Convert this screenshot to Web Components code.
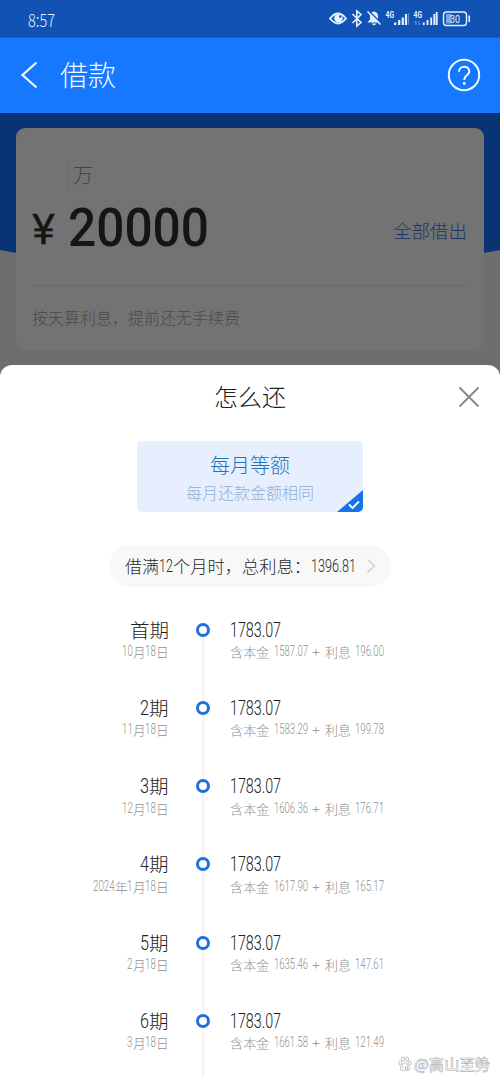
<!DOCTYPE html>
<html lang="zh-CN"><head><meta charset="utf-8"><title>借款</title>
<style>
html,body{margin:0;height:1083px;overflow:hidden;background:#fff}
body{font-family:Roboto,"Noto Sans CJK SC",sans-serif;color:#333;font-weight:300}
</style></head><body>
<loan-app></loan-app>
<script>
// Text condensed or expanded horizontally to the width in its "w" attribute.
class FitText extends HTMLElement{
  constructor(){super();this.attachShadow({mode:'open'}).innerHTML=`<style>
  :host{display:block;white-space:nowrap;flex:none}
  span{display:inline-block;transform-origin:0 50%}</style><span><slot></slot></span>`}
  connectedCallback(){
    const s=this.shadowRoot.firstElementChild.nextElementSibling,w=+this.getAttribute('w');
    this.style.width=w+'px';
    const n=s.offsetWidth&&s.getBoundingClientRect().width;
    if(n)s.style.transform=`scaleX(${w/n})`;
  }
}
class StatusBar extends HTMLElement{
  constructor(){super();this.attachShadow({mode:'open'}).innerHTML=`<style>
  :host{display:flex;justify-content:space-between;box-sizing:border-box;height:38px;background:#1152b4;color:#d9f2ff;padding:9px 30px 0 28px;border-bottom:1px solid #1a61c8}
  fit-text{font:300 18px/20px "Noto Sans CJK SC",sans-serif;}
  svg{display:block;margin-top:-9px}</style>
  <fit-text w="27">8:57</fit-text>
  <svg width="142" height="37" viewBox="328 0 142 37" fill="none" stroke="#e2f3ff">
   <path d="M330 18.5Q338 8.5 346 18.5Q338 28.5 330 18.5Z" stroke-width="1.8"/><circle cx="338.5" cy="18.3" r="4.3" fill="#e2f3ff" stroke="none"/><circle cx="340.300" cy="16.5" r="1.2" fill="#1152b4" stroke="none"/>
   <path d="M352.5 14l8.5 8.5-4.2 3.5V11l4.2 3.5-8.5 8.5" stroke-width="1.6"/>
   <path d="M367.500 22.500l2.500-3v-3q0-4.500 4-5q4 .5 4 5v3l2.500 3zM371.500 23.500h5q-2.500 3.500-5 0" fill="#e2f3ff" stroke="none"/>
   <path d="M368.500 10.500l13 13" stroke="#1152b4" stroke-width="1.500"/><path d="M367.500 11.500l13 13" stroke-width="1.5"/>
   <path d="M395.200 25v-2.500M399.200 25v-5M402.800 25v-7.500M406 25v-11" stroke-width="2.200"/><path d="M408.500 25V13" stroke="#5991d8" stroke-width="1.2"/>
   <path d="M423.700 25v-2.500M427.500 25v-5M431.200 25v-7.500M434.300 25v-11M436.700 25V12" stroke-width="1.900"/>
   <path d="M416 25v-4l-1.300 1.500M419 21v4l1.300-1.500" stroke="#5eb0ef" stroke-width=".9"/>
   <g fill="#e2f3ff" stroke="none" font-family="Roboto" font-weight="700" font-size="8.200"><text x="385.500" y="17.800" textLength="8.500" lengthAdjust="spacingAndGlyphs">4G</text><text x="413.500" y="17.800" textLength="8.500" lengthAdjust="spacingAndGlyphs">4G</text></g>
   <rect x="443.500" y="12" width="23" height="13.500" rx="3" stroke-width="1.400"/><path d="M446 14h5.500v9.500H446z" fill="#7da8df" stroke="none"/><path d="M469.200 15.500v6.500" stroke-width="1.600"/>
   <text x="450" y="22.800" fill="#e2f3ff" stroke="none" font-family="Roboto" font-weight="400" font-size="11.500" textLength="10" lengthAdjust="spacingAndGlyphs">30</text>
  </svg>`}
}
class NavBar extends HTMLElement{
  constructor(){super();this.attachShadow({mode:'open'}).innerHTML=`<style>
  :host{display:flex;align-items:center;box-sizing:border-box;height:75px;background:#1677ff;color:#f0fbff;padding:0 19px 0 20px}
  fit-text{font:300 28px/40px "Noto Sans CJK SC",sans-serif;margin:-4px auto 0 22px}
  svg{fill:none;stroke:#f0fbff;flex:none;margin-top:-1px}</style>
  <svg width="18" height="30" viewBox="0 0 18 30"><path d="M16.500 2.500L2.500 15L16.500 27.500" stroke-width="2.200"/></svg>
  <fit-text w="56"><slot></slot></fit-text>
  <svg width="34" height="34" viewBox="0 0 34 34"><circle cx="17" cy="17" r="15.200" stroke-width="2"/><path d="M12 13.700C12 7 22.300 7 22.300 13.500C22.300 17 17.200 17.300 17.200 22" stroke-width="2"/><circle cx="17.200" cy="25.500" r="1.400" fill="#f0fbff" stroke="none"/></svg>`}
}
class LoanCard extends HTMLElement{
  constructor(){super();this.attachShadow({mode:'open'}).innerHTML=`<style>
  :host{display:block;box-sizing:border-box;height:262px;padding:15px 16px 0;background:#6e6e6e url('data:image/svg+xml,<svg xmlns="http://www.w3.org/2000/svg" width="500" height="150"><path d="M0 0H500V137Q250 185 0 137Z" fill="%23083474"/></svg>') no-repeat}
  .card{box-sizing:border-box;height:222px;background:#737373;border-radius:9px;padding:34px 16px 0;}
  .unit{display:flex;margin-left:35px;border-left:1px solid #686868;padding-left:5px;height:26px;font:300 20px/26px "Noto Sans CJK SC";color:#444}
  .sum{display:flex;align-items:flex-start;height:97px;border-bottom:1px solid #696969;color:#151515}
  .yen{font:400 43px/60px Roboto;margin-top:11px;-webkit-text-stroke:.3px #151515}
  .num{font:500 54.500px/60px Roboto;margin:9px auto 0 13px}
  .all{font:300 18.700px/28px "Noto Sans CJK SC";color:#17376b;margin:28px 1px 0 0}
  .note{font:300 16px/24px "Noto Sans CJK SC";color:#4a4a4a;margin-top:19px}
  </style><div class="card"><div class="unit"><fit-text w="20">万</fit-text></div>
  <div class="sum"><fit-text class="yen" w="23">¥</fit-text><fit-text class="num" w="141">20000</fit-text><fit-text class="all" w="74">全部借出</fit-text></div>
  <fit-text class="note" w="208">按天算利息，提前还无手续费</fit-text></div>`}
}
class PlanOption extends HTMLElement{
  constructor(){super();this.attachShadow({mode:'open'}).innerHTML=`<style>
  :host{display:flex;flex-direction:column;align-items:center;position:relative;box-sizing:border-box;width:226px;height:71px;padding-top:10px;border-radius:5px;background:#e7effe;overflow:hidden}
  .t{font:300 20px/28px "Noto Sans CJK SC";color:#1d73b9}.s{font:300 16px/24px "Noto Sans CJK SC";color:#8fb2d2;margin-top:1px}
  svg{position:absolute;right:0;bottom:0}</style>
  <fit-text class="t" w="80"><slot></slot></fit-text><fit-text class="s" w="128"><slot name="sub"></slot></fit-text>
  <svg width="27" height="22" viewBox="0 0 27 22"><path d="M27 0V22H1Z" fill="#1673ec"/><path d="M13 14.500l3.500 3.500 6.500-6.500" fill="none" stroke="#fff" stroke-width="1.800"/></svg>`}
}
class TotalPill extends HTMLElement{
  constructor(){super();this.attachShadow({mode:'open'}).innerHTML=`<style>
  :host{display:flex;align-items:center;box-sizing:border-box;width:282px;height:42px;padding:0 15px 0 16px;border-radius:21px;background:#f8f8f8;color:#282828;font:300 17px/26px "Noto Sans CJK SC"}
  .n{font:300 18.500px/26px Roboto}
  svg{margin-left:auto}</style>
  <fit-text w="34">借满</fit-text><fit-text class="n" w="14">12</fit-text><fit-text w="138">个月时，总利息：</fit-text><fit-text class="n" w="45">1396.81</fit-text>
  <svg width="10" height="16" viewBox="0 0 10 16"><path d="M1.500 1.500L8.500 8L1.500 14.500" fill="none" stroke="#ccc" stroke-width="1.300"/></svg>`}
}
class PlanRow extends HTMLElement{
  constructor(){super();this.attachShadow({mode:'open'})}
  connectedCallback(){
    const a=n=>this.getAttribute(n),t=(s,nw,cw)=>s.match(/\d+|\D+/g).map(p=>/\d/.test(p)
      ?`<fit-text class="n" w="${p.length*nw}">${p}</fit-text>`:`<fit-text w="${p.length*cw}">${p}</fit-text>`).join('');
    this.shadowRoot.innerHTML=`<style>
    :host{display:grid;grid-template-columns:168.500px 67.500px 1fr;height:78.250px}
    .l{display:flex;flex-direction:column;align-items:flex-end}.r{margin-left:-6.500px}
    .a,.b{display:flex}.a{font:300 19.500px/28px "Noto Sans CJK SC";color:#222;height:28px}
    .b{font:300 13px/20px "Noto Sans CJK SC";color:#909090;height:20px;margin-top:-1.500px}
    .a .n{font:300 20px/28px Roboto}.b .n{font:300 14.500px/20px Roboto}
    .m{background:linear-gradient(#f3f3f3,#f3f3f3) 33px ${a('first')!==null?14:0}px/2px 100% no-repeat}
    i{display:block;box-sizing:border-box;width:14px;height:14px;margin:7px 0 0 27px;border:3.800px solid #1f6fdc;border-radius:50%;background:#fff}
    .r .b{gap:4.500px}</style>
    <div class="l"><div class="a">${t(a('term'),9,19.5)}</div><div class="b">${t(a('date'),5.4,12.6)}</div></div>
    <div class="m"><i></i></div>
    <div class="r"><div class="a"><fit-text class="n" w="51">1783.07</fit-text></div>
    <div class="b"><fit-text w="39.500">含本金</fit-text><fit-text class="n" w="34">${a('principal')}</fit-text><fit-text w="8">+</fit-text><fit-text w="26">利息</fit-text><fit-text class="n" w="29">${a('interest')}</fit-text></div></div>`;
  }
}
class WaterMark extends HTMLElement{
  constructor(){super();this.attachShadow({mode:'open'}).innerHTML=`<style>
  :host{display:flex;align-items:center;position:absolute;left:398px;top:1054px;height:20px;color:#fff;font:500 15px/20px "Noto Sans CJK SC"}
  fit-text{-webkit-text-stroke:.6px #b0b0b0;margin-left:2px}</style>
  <svg width="14" height="16" viewBox="0 0 14 16" fill="#fff" stroke="#b0b0b0" stroke-width=".8"><ellipse cx="2.300" cy="7" rx="1.500" ry="2.100"/><ellipse cx="5" cy="3" rx="1.500" ry="2.100"/><ellipse cx="9" cy="3" rx="1.500" ry="2.100"/><ellipse cx="11.700" cy="7" rx="1.500" ry="2.100"/><path d="M7 6.500Q9 7 10 9.500Q13 12 11 14Q9 15 7 14Q5 15 3 14Q1 12 4 9.500Q5 7 7 6.500Z"/><path d="M5 10.500v2M7.500 10v3h2v-3"/></svg>
  <fit-text w="76">@高山至势</fit-text>`}
}
class PlanSheet extends HTMLElement{
  constructor(){super();this.attachShadow({mode:'open'}).innerHTML=`<style>
  :host{display:flex;flex-direction:column;align-items:center;position:relative;box-sizing:border-box;height:718px;margin-top:-10px;background:#fff;border-radius:12px 12px 0 0}
  header{display:grid;grid-template-columns:1fr auto 1fr;align-items:center;width:100%;height:64px}
  header fit-text{font:300 24px/34px "Noto Sans CJK SC";color:#202020;grid-column:2;margin-top:-2px}
  header svg{justify-self:end;margin-right:20px}
  plan-option{margin-top:11.500px}total-pill{margin-top:33.500px}
  .list{width:100%;margin-top:28.700px;height:461px;overflow:hidden}</style>
  <header><fit-text w="72">怎么还</fit-text><svg width="22" height="22" viewBox="0 0 22 22"><path d="M1.500 1.500L20.500 20.500M20.500 1.500L1.500 20.500" stroke="#868686" stroke-width="1.800"/></svg></header>
  <plan-option>每月等额<span slot="sub">每月还款金额相同</span></plan-option><total-pill></total-pill>
  <div class="list">
  <plan-row first term="首期" date="10月18日" principal="1587.07" interest="196.00"></plan-row>
  <plan-row term="2期" date="11月18日" principal="1583.29" interest="199.78"></plan-row>
  <plan-row term="3期" date="12月18日" principal="1606.36" interest="176.71"></plan-row>
  <plan-row term="4期" date="2024年1月18日" principal="1617.90" interest="165.17"></plan-row>
  <plan-row term="5期" date="2月18日" principal="1635.46" interest="147.61"></plan-row>
  <plan-row term="6期" date="3月18日" principal="1661.58" interest="121.49"></plan-row></div>`}
}
class LoanApp extends HTMLElement{
  constructor(){super();this.attachShadow({mode:'open'}).innerHTML=`<style>:host{display:block;height:1083px;overflow:hidden;position:relative}</style>
  <status-bar></status-bar><nav-bar>借款</nav-bar><loan-card></loan-card><plan-sheet></plan-sheet><water-mark></water-mark>`}
}
for(const [n,c] of [['status-bar',StatusBar],['nav-bar',NavBar],['loan-card',LoanCard],['plan-option',PlanOption],['total-pill',TotalPill],['plan-row',PlanRow],['water-mark',WaterMark],['plan-sheet',PlanSheet],['loan-app',LoanApp],['fit-text',FitText]])customElements.define(n,c);
</script></body></html>
